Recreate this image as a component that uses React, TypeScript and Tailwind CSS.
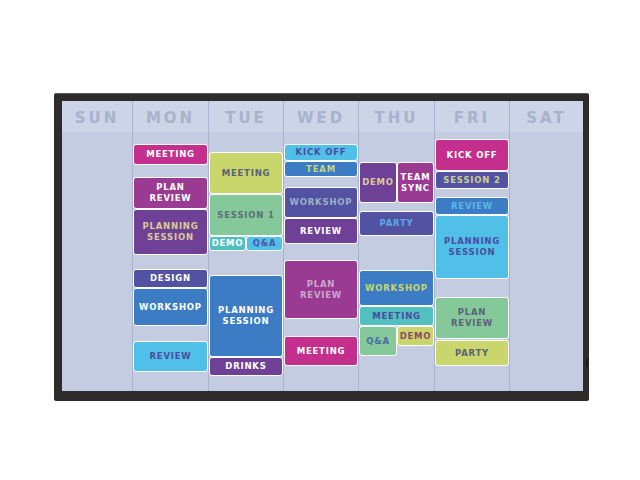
import React from 'react';

type Block = { t: string; c: string };
type Item = Block | { row: Block[]; c: string };

const font = { fontFamily: '"DejaVu Sans", "Liberation Sans", sans-serif' };

// colours used on the board
// magenta #c42e8c, plum #9b3a93, purple #6f4196, indigo #5352a2,
// blue #3c7cc5, cyan #50c0e8, teal #52bfc0, green #85c99a, lime #c9d66c

const days: { name: string; w: string; items: Item[] }[] = [
	{ name: 'SUN', w: 'w-[70px]', items: [] },
	{
		name: 'MON',
		w: 'w-[76px]',
		items: [
			{ t: 'MEETING', c: 'mt-[12px] h-[21px] bg-[#c42e8c] text-white' },
			{ t: 'PLAN\nREVIEW', c: 'mt-[12px] h-[32px] bg-[#9b3a93] text-white' },
			{ t: 'PLANNING\nSESSION', c: 'h-[46px] bg-[#6f4196] text-[#dccb9a]' },
			{ t: 'DESIGN', c: 'mt-[14px] h-[19px] bg-[#5352a2] text-white' },
			{ t: 'WORKSHOP', c: 'h-[38px] bg-[#3c7cc5] text-white' },
			{ t: 'REVIEW', c: 'mt-[15px] h-[31px] bg-[#50c0e8] text-[#4b4c9f]' },
		],
	},
	{
		name: 'TUE',
		w: 'w-[75px]',
		items: [
			{ t: 'MEETING', c: 'mt-[20px] h-[42px] bg-[#c9d66c] text-[#5b6178]' },
			{ t: 'SESSION 1', c: 'h-[42px] bg-[#85c99a] text-[#5e6d78]' },
			{
				c: 'h-[15px]',
				row: [
					{ t: 'DEMO', c: 'w-[37px] bg-[#52bfc0] text-white' },
					{ t: 'Q&A', c: 'flex-1 bg-[#50c0e8] text-[#4b56a8]' },
				],
			},
			{ t: 'PLANNING\nSESSION', c: 'mt-[24px] h-[82px] bg-[#3c7cc5] text-white' },
			{ t: 'DRINKS', c: 'h-[19px] bg-[#6f4196] text-white' },
		],
	},
	{
		name: 'WED',
		w: 'w-[75px]',
		items: [
			{ t: 'KICK OFF', c: 'mt-[12px] h-[17px] bg-[#50c0e8] text-[#4b4c9f]' },
			{ t: 'TEAM', c: 'h-[16px] bg-[#3c7cc5] text-[#c8d670]' },
			{ t: 'WORKSHOP', c: 'mt-[10px] h-[31px] bg-[#5352a2] text-[#9db0c4]' },
			{ t: 'REVIEW', c: 'h-[26px] bg-[#6f4196] text-white' },
			{ t: 'PLAN\nREVIEW', c: 'mt-[16px] h-[59px] bg-[#9b3a93] text-[#caa8c9]' },
			{ t: 'MEETING', c: 'mt-[17px] h-[30px] bg-[#c42e8c] text-white' },
		],
	},
	{
		name: 'THU',
		w: 'w-[76px]',
		items: [
			{
				c: 'mt-[30px] h-[41px]',
				row: [
					{ t: 'DEMO', c: 'w-[38px] bg-[#6f4196] text-[#dccb9a]' },
					{ t: 'TEAM\nSYNC', c: 'flex-1 bg-[#9b3a93] text-white' },
				],
			},
			{ t: 'PARTY', c: 'mt-[8px] h-[25px] bg-[#5352a2] text-[#5aa9e6]' },
			{ t: 'WORKSHOP', c: 'mt-[34px] h-[36px] bg-[#3c7cc5] text-[#c8d670]' },
			{ t: 'MEETING', c: 'h-[20px] bg-[#52bfc0] text-[#4b4c9f]' },
			{
				c: 'h-[30px] items-start',
				row: [
					{ t: 'Q&A', c: 'w-[38px] h-[30px] bg-[#85c99a] text-[#4a6aa6]' },
					{ t: 'DEMO', c: 'flex-1 h-[20px] bg-[#c9d66c] text-[#8d4a6c]' },
				],
			},
		],
	},
	{
		name: 'FRI',
		w: 'w-[75px]',
		items: [
			{ t: 'KICK OFF', c: 'mt-[7px] h-[32px] bg-[#c42e8c] text-white' },
			{ t: 'SESSION 2', c: 'h-[18px] bg-[#5352a2] text-[#cbcf8c]' },
			{ t: 'REVIEW', c: 'mt-[8px] h-[18px] bg-[#3c7cc5] text-[#5ab8e8]' },
			{ t: 'PLANNING\nSESSION', c: 'h-[64px] bg-[#50c0e8] text-[#4b4c9f]' },
			{ t: 'PLAN\nREVIEW', c: 'mt-[18px] h-[42px] bg-[#85c99a] text-[#5b6178]' },
			{ t: 'PARTY', c: 'mt-[1px] h-[26px] bg-[#c9d66c] text-[#5b6178]' },
		],
	},
	{ name: 'SAT', w: 'w-[74px]', items: [] },
];

function Tile({ t, c }: Block) {
	return (
		<div
			className={`flex items-center justify-center text-center whitespace-pre-line border border-white rounded-[3px] font-bold text-[8.5px] leading-[11px] tracking-[0.8px] ${c}`}
		>
			{t}
		</div>
	);
}

export default function App() {
	return (
		<div className="w-[640px] h-[480px] bg-white overflow-hidden" style={font}>
			<div className="relative ml-[54px] mt-[93px] w-[535px] h-[308px] rounded-[2px] bg-[#2d2c2b] border-t border-[#5d5c5a] pt-[7px] pl-[8px] pr-[6px] pb-[10px]">
				<div className="flex h-full bg-[#c4cce1]">
					{days.map((d, i) => (
						<div key={d.name} className={`${d.w} flex flex-col ${i ? 'border-l border-[#a9b3cb]' : ''}`}>
							<div className="h-[31px] shrink-0 bg-[#ccd4e8] flex items-center justify-center pt-[3px] text-[15px] font-bold tracking-[3px] text-[#a8b2cb]">
								{d.name}
							</div>
							<div className="flex-1 flex flex-col">
								{d.items.map((it, j) =>
									'row' in it ? (
										<div key={j} className={`flex ${it.c}`}>
											{it.row.map((b, k) => (
												<Tile key={k} t={b.t} c={b.c} />
											))}
										</div>
									) : (
										<Tile key={j} t={it.t} c={it.c} />
									)
								)}
							</div>
						</div>
					))}
				</div>
				<span className="absolute right-[1px] top-[264px] w-[2px] h-[9px] rounded-[1px] bg-[#1b1b1b]" />
			</div>
		</div>
	);
}
